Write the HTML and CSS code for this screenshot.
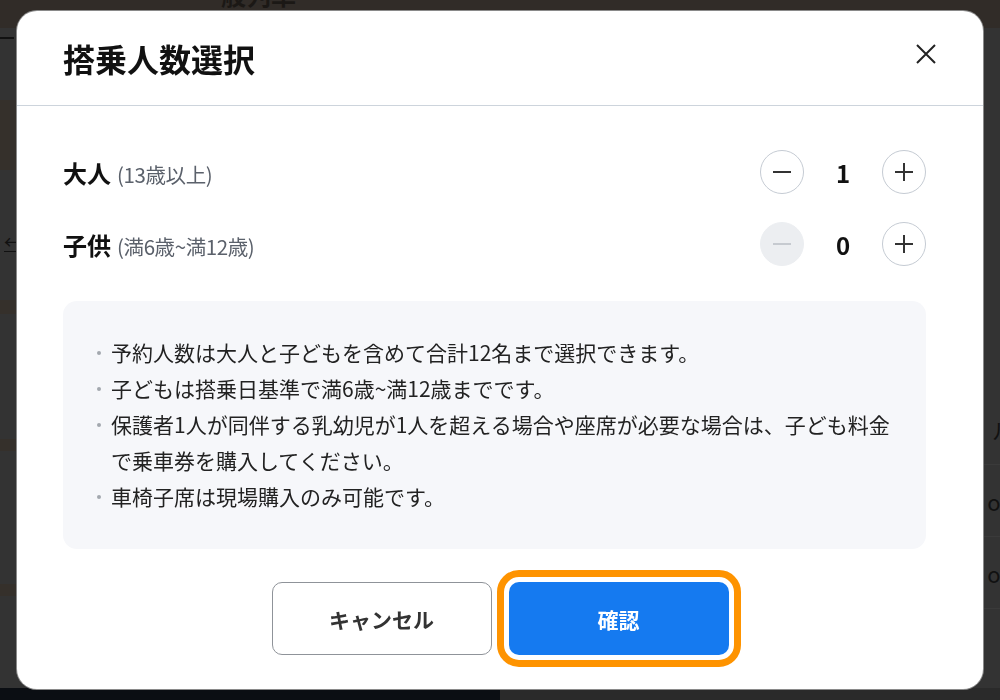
FILE: index.html
```html
<!DOCTYPE html>
<html lang="ja">
<head>
<meta charset="utf-8">
<title>搭乗人数選択</title>
<link rel="stylesheet" href="styles.css">
</head>
<body>
<div class="page" aria-hidden="true">
  <div class="bg-col bg-left">
    <div class="bg-top"><span class="bg-top-title">一般列車</span></div>
    <div class="bg-band bg-band-a"><span class="bg-rule"></span></div>
    <div class="bg-band bg-brown bg-h70"></div>
    <div class="bg-band bg-h130"><span class="bg-arrow">←</span></div>
    <div class="bg-band bg-brown bg-h14"></div>
    <div class="bg-band bg-h125"></div>
    <div class="bg-band bg-brown bg-h12"></div>
    <div class="bg-band bg-h133"></div>
    <div class="bg-band bg-brown bg-h12"></div>
    <div class="bg-band bg-fill"></div>
    <div class="bg-band bg-black bg-h12"></div>
  </div>
  <div class="bg-col bg-right">
    <div class="bg-top"></div>
    <div class="bg-band bg-h365"></div>
    <div class="bg-row"><span>ル</span></div>
    <div class="bg-row"><span>on</span></div>
    <div class="bg-row"><span>on</span></div>
    <div class="bg-band bg-fill"></div>
    <div class="bg-band bg-bottom bg-h12"></div>
  </div>
</div>

<div class="overlay">
  <div class="modal" role="dialog" aria-labelledby="modal-title">
    <header class="modal-head">
      <h2 class="modal-title" id="modal-title">搭乗人数選択</h2>
      <button class="close-btn" type="button" aria-label="閉じる">
        <svg viewBox="0 0 20 20" width="20" height="20"><path d="M1 1 L19 19 M19 1 L1 19" stroke="#222" stroke-width="2" fill="none"/></svg>
      </button>
    </header>

    <div class="modal-body">
      <div class="counter-list">
        <div class="counter-row">
          <div class="counter-label"><span class="label-main">大人</span><span class="label-sub">(13歳以上)</span></div>
          <div class="stepper">
            <button class="step-btn" type="button" aria-label="減らす">
              <svg viewBox="0 0 20 20" width="20" height="20"><path d="M1 10 H19" stroke="#333" stroke-width="2" fill="none"/></svg>
            </button>
            <span class="count">1</span>
            <button class="step-btn" type="button" aria-label="増やす">
              <svg viewBox="0 0 20 20" width="20" height="20"><path d="M1 10 H19 M10 1 V19" stroke="#333" stroke-width="2" fill="none"/></svg>
            </button>
          </div>
        </div>
        <div class="counter-row">
          <div class="counter-label"><span class="label-main">子供</span><span class="label-sub">(満6歳~満12歳)</span></div>
          <div class="stepper">
            <button class="step-btn is-disabled" type="button" aria-label="減らす" disabled>
              <svg viewBox="0 0 20 20" width="20" height="20"><path d="M1 10 H19" stroke="#c6cad0" stroke-width="2" fill="none"/></svg>
            </button>
            <span class="count">0</span>
            <button class="step-btn" type="button" aria-label="増やす">
              <svg viewBox="0 0 20 20" width="20" height="20"><path d="M1 10 H19 M10 1 V19" stroke="#333" stroke-width="2" fill="none"/></svg>
            </button>
          </div>
        </div>
      </div>

      <ul class="notes">
        <li>予約人数は大人と子どもを含めて合計12名まで選択できます。</li>
        <li>子どもは搭乗日基準で満6歳~満12歳までです。</li>
        <li>保護者1人が同伴する乳幼児が1人を超える場合や座席が必要な場合は、子ども料金で乗車券を購入してください。</li>
        <li>車椅子席は現場購入のみ可能です。</li>
      </ul>
    </div>

    <footer class="modal-foot">
      <button class="btn btn-cancel" type="button">キャンセル</button>
      <button class="btn btn-confirm" type="button">確認</button>
    </footer>
  </div>
</div>
</body>
</html>
```

FILE: styles.css
```css
* { box-sizing: border-box; }

html, body {
  margin: 0;
  padding: 0;
  width: 1000px;
  height: 700px;
  overflow: hidden;
  font-family: "Noto Sans CJK JP", "Noto Sans", sans-serif;
  background: #333333;
}

/* ---- dimmed background page ---- */
.page {
  display: grid;
  grid-template-columns: 500px 500px;
  height: 700px;
}

.bg-col {
  display: flex;
  flex-direction: column;
  height: 700px;
}

.bg-top {
  height: 28px;
  flex: none;
  background: #312c28;
  overflow: hidden;
}

.bg-top-title {
  display: block;
  margin: -21px 0 0 196px;
  font-size: 25px;
  font-weight: 700;
  line-height: 30px;
  color: #1b1815;
}

.bg-band { flex: none; }
.bg-band-a { height: 72px; padding-top: 9px; }
.bg-rule { display: block; width: 14px; height: 2px; background: #111; }
.bg-brown { background: #35302b; }
.bg-black { background: #0b0e13; }
.bg-bottom { background: #2a2a2a; }
.bg-h12 { height: 12px; }
.bg-h14 { height: 14px; }
.bg-h70 { height: 70px; }
.bg-h125 { height: 125px; }
.bg-h130 { height: 130px; padding: 60px 0 0 4px; }
.bg-h133 { height: 133px; }
.bg-h365 { height: 365px; }
.bg-fill { flex: 1; }

.bg-arrow {
  display: inline-block;
  font-size: 18px;
  line-height: 20px;
  color: #111;
  border-bottom: 1px solid #111;
}

.bg-right .bg-row {
  height: 72px;
  display: flex;
  align-items: center;
  justify-content: flex-end;
  border-bottom: 1px solid #3a3a3a;
  font-size: 22px;
  color: #111;
  margin-right: -14px;
}

/* ---- modal overlay ---- */
.overlay {
  position: fixed;
  inset: 0;
  display: flex;
  align-items: center;
  justify-content: center;
}

.modal {
  width: 966px;
  height: 678px;
  background: #ffffff;
  border-radius: 20px;
  box-shadow: 0 0 0 1px #8a8a8a;
  display: flex;
  flex-direction: column;
  overflow: hidden;
}

.modal-head {
  height: 95px;
  flex: none;
  display: flex;
  align-items: center;
  justify-content: space-between;
  padding: 0 37px 0 46px;
  border-bottom: 1px solid #cdd4dc;
}

.modal-title {
  margin: 0;
  font-size: 32px;
  font-weight: 700;
  line-height: 1;
  color: #111111;
}

.close-btn {
  width: 40px;
  height: 40px;
  border: 0;
  padding: 0;
  background: transparent;
  display: flex;
  align-items: center;
  justify-content: center;
  margin-top: -8px;
}

.modal-body {
  padding: 44px 57px 0 46px;
}

.counter-list {
  display: flex;
  flex-direction: column;
  gap: 28px;
}

.counter-row {
  height: 44px;
  display: flex;
  align-items: center;
  justify-content: space-between;
}

.counter-label {
  display: flex;
  align-items: baseline;
  gap: 6px;
}

.label-main {
  font-size: 24px;
  font-weight: 700;
  color: #111111;
}

.label-sub {
  font-size: 20.5px;
  color: #5b616b;
  letter-spacing: -0.4px;
}

.stepper {
  display: flex;
  align-items: center;
}

.step-btn {
  width: 44px;
  height: 44px;
  border-radius: 50%;
  border: 1px solid #c5cbd3;
  background: #ffffff;
  padding: 0;
  display: flex;
  align-items: center;
  justify-content: center;
}

.step-btn.is-disabled {
  background: #eceef1;
  border-color: #eceef1;
}

.count {
  width: 78px;
  text-align: center;
  font-size: 24px;
  font-weight: 700;
  color: #111111;
}

.notes {
  list-style: none;
  margin: 35px 0 0 0;
  padding: 33px 34px 34px 34px;
  background: #f6f7fa;
  border-radius: 14px;
  height: 248px;
  font-size: 21px;
  line-height: 36px;
  color: #222222;
}

.notes li {
  display: flex;
  align-items: flex-start;
}

.notes li::before {
  content: "";
  flex: none;
  width: 4px;
  height: 4px;
  border-radius: 50%;
  background: #a3a8ae;
  margin: 17px 10px 0 0;
}

.modal-foot {
  display: flex;
  justify-content: center;
  gap: 17px;
  padding: 33px 0 0 0;
}

.btn {
  width: 220px;
  height: 73px;
  border-radius: 10px;
  font-family: inherit;
  font-size: 21px;
  font-weight: 700;
}

.btn-cancel {
  background: #ffffff;
  border: 1px solid #8f9399;
  color: #333333;
}

.btn-confirm {
  background: #157af0;
  border: 0;
  color: #ffffff;
  outline: 7px solid #fe9300;
  outline-offset: 5px;
}
```
